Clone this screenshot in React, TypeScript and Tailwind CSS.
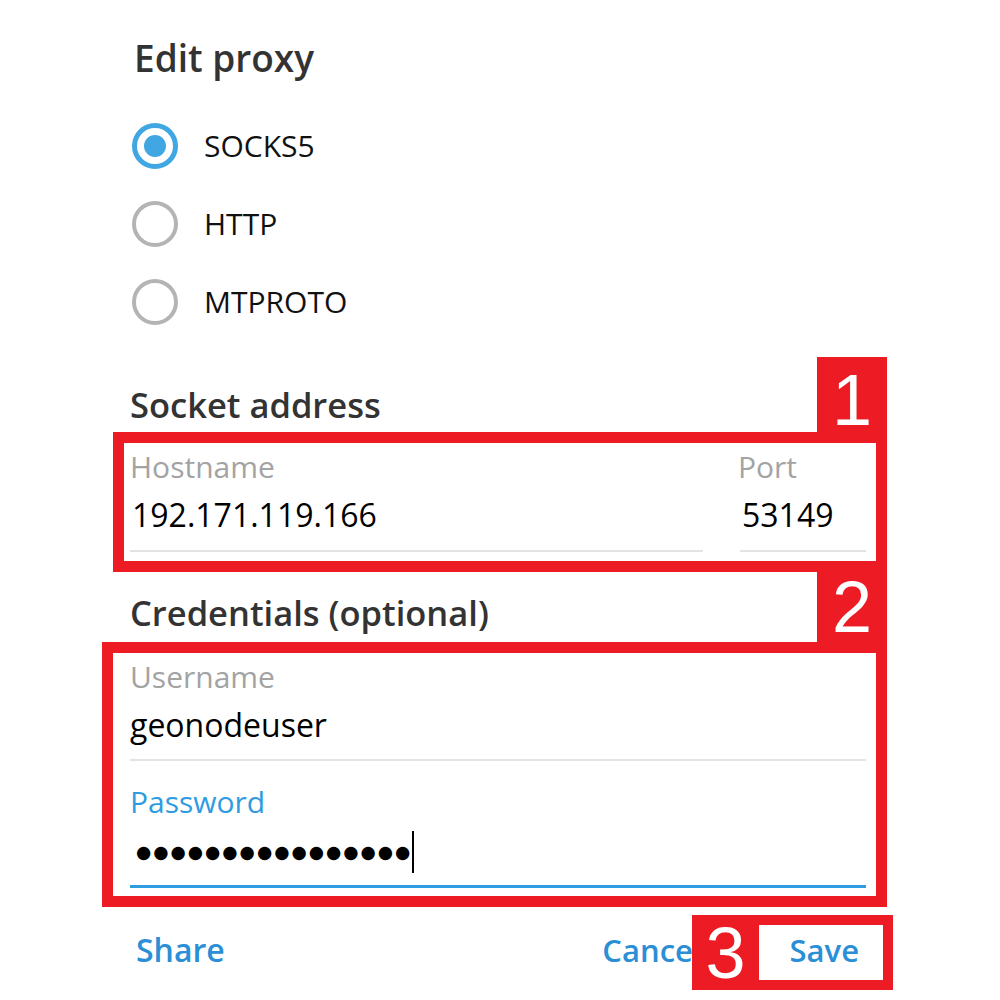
import React from 'react';

const RED = 'bg-[#ed1c24]';

type RadioProps = { label: string; checked?: boolean };

const Radio: React.FC<RadioProps> = ({ label, checked }) => (
    <div className="flex h-[78px] items-center">
        {checked ? (
            <div className="ml-[2px] flex h-[46px] w-[46px] items-center justify-center rounded-full border-[5px] border-[#40a7e3]">
                <div className="h-[22px] w-[22px] rounded-full bg-[#40a7e3]" />
            </div>
        ) : (
            <div className="ml-[2px] h-[46px] w-[46px] rounded-full border-[4px] border-[#b4b4b4]" />
        )}
        <span className="ml-[26px] text-[30px] leading-[30px] text-[#111]">{label}</span>
    </div>
);

const Label: React.FC<{ children: React.ReactNode; active?: boolean }> = ({ children, active }) => (
    <div
        className={
            active
                ? 'h-[30px] text-[30px] leading-[30px] text-[#2f9be0]'
                : 'h-[30px] text-[30px] leading-[30px] text-[#a3a3a3]'
        }
    >
        {children}
    </div>
);

const Heading: React.FC<{ children: React.ReactNode; className?: string }> = ({ children, className }) => (
    <div className={`h-[40px] text-[34.5px] font-semibold leading-[40px] text-[#333] ${className ?? ''}`}>
        {children}
    </div>
);

export default function App() {
    return (
        <div
            className="relative h-[1000px] w-[1000px] overflow-hidden bg-white"
            style={{ fontFamily: '"Open Sans", "Noto Sans", sans-serif' }}
        >
            <div className="pl-[130px] pr-[134px] pt-[38px]">
                <div className="h-[40px] pl-[4px] text-[37px] font-semibold leading-[40px] text-[#333]">
                    Edit proxy
                </div>

                <div className="mt-[29px]">
                    <Radio label="SOCKS5" checked />
                    <Radio label="HTTP" />
                    <Radio label="MTPROTO" />
                </div>

                <Heading className="mt-[44px]">Socket address</Heading>

                <div className="mt-[27px] flex">
                    <div className="w-[573px]">
                        <Label>Hostname</Label>
                        <div className="mt-[16px] h-[34px] pl-[2px] text-[32px] leading-[34px] text-black">
                            192.171.119.166
                        </div>
                        <div className="mt-[18px] h-[2px] bg-[#e3e3e3]" />
                    </div>
                    <div className="ml-[35px] flex-1">
                        <Label>Port</Label>
                        <div className="mt-[16px] h-[34px] pl-[4px] text-[32px] leading-[34px] text-black">
                            53149
                        </div>
                        <div className="ml-[2px] mt-[18px] h-[2px] bg-[#e3e3e3]" />
                    </div>
                </div>

                <Heading className="mt-[41px]">Credentials (optional)</Heading>

                <div className="mt-[29px]">
                    <Label>Username</Label>
                    <div className="mt-[16px] h-[34px] text-[32px] leading-[34px] text-black">geonodeuser</div>
                    <div className="mt-[17px] h-[2px] bg-[#e3e3e3]" />
                </div>

                <div className="mt-[26px]">
                    <Label active>Password</Label>
                    <div className="mt-[18px] flex h-[34px] items-center pl-[6px]">
                        <span
                            className="text-[17.5px] leading-[34px] tracking-[2px] text-black"
                            style={{ fontFamily: '"DejaVu Sans", sans-serif' }}
                        >
                            {'\u25CF'.repeat(16)}
                        </span>
                        <span className="h-[42px] w-[2px] bg-black" />
                    </div>
                    <div className="mt-[16px] h-[3px] bg-[#2f9be0]" />
                </div>

                <div className="mt-[47px] flex h-[30px] items-center text-[31px] font-semibold leading-[30px] text-[#2a8fd6]">
                    <span className="ml-[6px] text-[32px]">Share</span>
                    <span className="flex-1" />
                    <span>Cancel</span>
                    <span className="ml-[88px] mr-[7px]">Save</span>
                </div>
            </div>

            {/* annotation frames */}
            <div className="pointer-events-none absolute inset-0" style={{ fontFamily: '"Liberation Sans", Arial, sans-serif' }}>
                <div className={`absolute left-[817px] top-[357px] flex h-[86px] w-[70px] items-center justify-center ${RED} text-[72px] leading-none text-white`}>
                    1
                </div>
                <div className="absolute left-[113px] top-[432px] h-[140px] w-[774px] border-[11px] border-[#ed1c24]" />
                <div className={`absolute left-[817px] top-[561px] flex h-[92px] w-[70px] items-center justify-center ${RED} text-[72px] leading-none text-white`}>
                    2
                </div>
                <div className="absolute left-[102px] top-[642px] h-[265px] w-[785px] border-[11px] border-[#ed1c24]" />
                <div className="absolute left-[692px] top-[915px] flex h-[75px] w-[201px] border-[10px] border-l-0 border-[#ed1c24]">
                    <div className={`flex w-[67px] items-center justify-center ${RED} text-[72px] leading-none text-white`}>
                        3
                    </div>
                </div>
            </div>
        </div>
    );
}
